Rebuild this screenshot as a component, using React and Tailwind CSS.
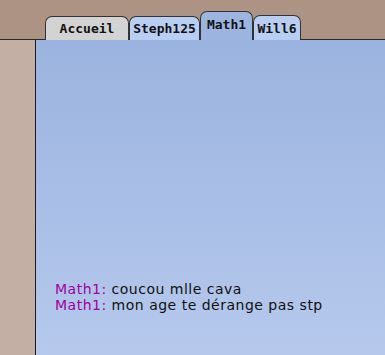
export default function App() {
  const tabs = [
    { label: "Accueil", w: "w-[84px]", h: "h-[24px]", bg: "bg-[#d3d3d3]" },
    { label: "Steph125", w: "w-[71px]", h: "h-[24px]", bg: "bg-[#b9cef3]" },
    { label: "Math1", w: "w-[53px]", h: "h-[29px]", bg: "bg-[#9cb4e0]", active: true },
    { label: "Will6", w: "w-[48px]", h: "h-[25px]", bg: "bg-[#b9cef3]" },
  ];

  return (
    <div className="flex h-[355px] w-[385px] flex-col overflow-hidden bg-[#9cb4e0]">
      <div className="flex h-[40px] shrink-0 items-end border-b border-[#2a2a2a] bg-[#ad9383] pl-[45px]">
        {tabs.map((t) => (
          <div
            key={t.label}
            className={`-mb-px flex shrink-0 items-center justify-center rounded-t-[7px] border border-b-0 border-[#333333] font-['DejaVu_Sans_Mono',monospace] text-[13px] font-bold text-[#111] ${t.w} ${t.h} ${t.bg} ${t.active ? "pb-[2px]" : "pt-[1px]"}`}
          >
            {t.label}
          </div>
        ))}
      </div>
      <div className="flex flex-1">
        <div className="w-[36px] shrink-0 border-r border-[#1a1a1a] bg-[#c4afa4]" />
        <div className="flex-1 bg-gradient-to-b from-[#9bb3df] to-[#b6c9ed] pl-[19px] pt-[241px] font-['DejaVu_Sans',sans-serif] text-[14px] leading-[16px] tracking-[0.5px] text-[#111]">
          <p>
            <span className="text-[#a0009f]">Math1:</span> coucou mlle cava
          </p>
          <p>
            <span className="text-[#a0009f]">Math1:</span> mon age te dérange pas stp
          </p>
        </div>
      </div>
    </div>
  );
}
